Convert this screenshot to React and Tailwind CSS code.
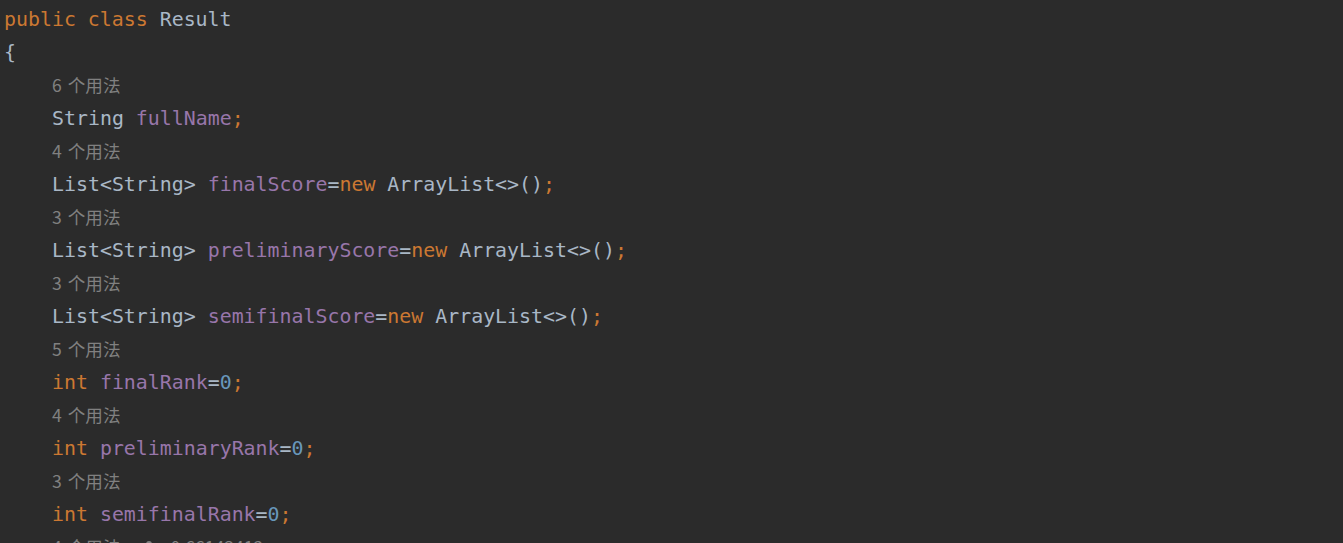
const K = ({ children }) => <span className="text-[#cc7832]">{children}</span>;
const F = ({ children }) => <span className="text-[#9876aa]">{children}</span>;
const N = ({ children }) => <span className="text-[#6897bb]">{children}</span>;

const Hint = ({ n, extra }) => (
  <div className="h-[33px] flex items-center pl-[52px] text-[#808080] text-[17.6px] [font-family:'Noto_Sans_CJK_SC',sans-serif] whitespace-pre">
    <span>{n}</span>
    <span className="ml-[6px]">个用法</span>
    {extra && (
      <span className="ml-[22px] flex items-center gap-[16px]">
        <svg width="12" height="14" viewBox="0 0 12 14" className="fill-[#808080]">
          <circle cx="6" cy="4" r="3" />
          <path d="M0 14c0-4 2.5-6 6-6s6 2 6 6z" />
        </svg>
        <span>0.66143412</span>
      </span>
    )}
  </div>
);

const Code = ({ children, indent = true }) => (
  <div className={`h-[33px] flex items-center whitespace-pre ${indent ? "pl-[52px]" : "pl-[4px]"}`}>
    {children}
  </div>
);

const App = () => {
  return (
    <div className="w-[1343px] h-[543px] overflow-hidden bg-[#2b2b2b] text-[#a9b7c6] text-[19.9px] [font-family:'DejaVu_Sans_Mono',monospace] pt-[3px]">
      <Code indent={false}>
        <K>public class </K>Result
      </Code>
      <Code indent={false}>{"{"}</Code>
      <Hint n={6} />
      <Code>
        String <F>fullName</F>
        <K>;</K>
      </Code>
      <Hint n={4} />
      <Code>
        {"List<String> "}
        <F>finalScore</F>=<K>new </K>
        {"ArrayList<>()"}
        <K>;</K>
      </Code>
      <Hint n={3} />
      <Code>
        {"List<String> "}
        <F>preliminaryScore</F>=<K>new </K>
        {"ArrayList<>()"}
        <K>;</K>
      </Code>
      <Hint n={3} />
      <Code>
        {"List<String> "}
        <F>semifinalScore</F>=<K>new </K>
        {"ArrayList<>()"}
        <K>;</K>
      </Code>
      <Hint n={5} />
      <Code>
        <K>int </K>
        <F>finalRank</F>=<N>0</N>
        <K>;</K>
      </Code>
      <Hint n={4} />
      <Code>
        <K>int </K>
        <F>preliminaryRank</F>=<N>0</N>
        <K>;</K>
      </Code>
      <Hint n={3} />
      <Code>
        <K>int </K>
        <F>semifinalRank</F>=<N>0</N>
        <K>;</K>
      </Code>
      <Hint n={4} extra />
    </div>
  );
};

export default App;
